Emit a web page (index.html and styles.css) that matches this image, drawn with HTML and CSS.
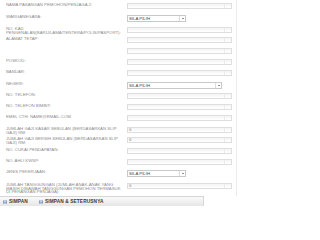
FILE: index.html
```html
<!DOCTYPE html>
<html>
<head>
<meta charset="utf-8">
<link rel="stylesheet" href="styles.css">
</head>
<body>
<div class="form">
  <div class="row r12">
    <div class="label">NAMA PASANGAN PEMOHON/PENJAGA 2:</div>
    <div class="field"><div class="input"></div></div>
  </div>
  <div class="row r12">
    <div class="label">WARGANEGARA:</div>
    <div class="field"><div class="select"><span class="sel-text">SILA PILIH</span><span class="sel-arrow"></span></div></div>
  </div>
  <div class="row r10">
    <div class="label">NO. KAD<br><span class="nowrap">PENGENALAN(BARU/LAMA/TENTERA/POLIS/PASPORT):</span></div>
    <div class="field"><div class="input"></div></div>
  </div>
  <div class="row r22">
    <div class="label">ALAMAT TETAP:</div>
    <div class="field stack"><div class="input"></div><div class="input"></div></div>
  </div>
  <div class="row">
    <div class="label">POSKOD:</div>
    <div class="field"><div class="input"></div></div>
  </div>
  <div class="row r12">
    <div class="label">BANDAR:</div>
    <div class="field"><div class="input"></div></div>
  </div>
  <div class="row">
    <div class="label">NEGERI:</div>
    <div class="field"><div class="select wide"><span class="sel-text">SILA PILIH</span><span class="sel-arrow"></span></div></div>
  </div>
  <div class="row">
    <div class="label">NO. TELEFON:</div>
    <div class="field"><div class="input"></div></div>
  </div>
  <div class="row">
    <div class="label">NO. TELEFON BIMBIT:</div>
    <div class="field"><div class="input"></div></div>
  </div>
  <div class="row r12">
    <div class="label">EMEL CTH: NAME@EMAIL.COM</div>
    <div class="field"><div class="input"></div></div>
  </div>
  <div class="row r10">
    <div class="label">JUMLAH GAJI KASAR SEBULAN (BERDASARKAN SLIP GAJI) RM:</div>
    <div class="field"><div class="input"><span class="val">0</span></div></div>
  </div>
  <div class="row">
    <div class="label">JUMLAH GAJI BERSIH SEBULAN (BERDASARKAN SLIP GAJI) RM:</div>
    <div class="field"><div class="input"><span class="val">0</span></div></div>
  </div>
  <div class="row">
    <div class="label">NO. CUKAI PENDAPATAN:</div>
    <div class="field"><div class="input"></div></div>
  </div>
  <div class="row">
    <div class="label">NO. AHLI KWSP:</div>
    <div class="field"><div class="input"></div></div>
  </div>
  <div class="row r13">
    <div class="label">JENIS PEKERJAAN:</div>
    <div class="field"><div class="select"><span class="sel-text">SILA PILIH</span><span class="sel-arrow"></span></div></div>
  </div>
  <div class="row r13">
    <div class="label">JUMLAH TANGGUNGAN (JUMLAH ANAK-ANAK YANG MASIH DIBAWAH TANGGUNGAN PEMOHON TERMASUK DI PERANGAN PENJAGA):</div>
    <div class="field"><div class="input"><span class="val">0</span></div></div>
  </div>
</div>
<div class="bar">
  <span class="btn">
    <svg class="ico" viewBox="0 0 8 8"><rect x="0.5" y="0.5" width="7" height="7" rx="1" fill="#6b87b3"/><rect x="2" y="1" width="4" height="2.5" fill="#e8eef7"/><rect x="2" y="5" width="4" height="2.5" fill="#c9d4e6"/></svg>
    SIMPAN
  </span>
  <span class="btn">
    <svg class="ico" viewBox="0 0 8 8"><rect x="0.5" y="0.5" width="7" height="7" rx="1" fill="#6b87b3"/><rect x="2" y="1" width="4" height="2.5" fill="#e8eef7"/><rect x="2" y="5" width="4" height="2.5" fill="#c9d4e6"/></svg>
    SIMPAN &amp; SETERUSNYA
  </span>
</div>
</body>
</html>
```

FILE: styles.css
```css
html, body {
  margin: 0;
  padding: 0;
  background: #ffffff;
  overflow: hidden;
}
body {
  font-family: "Liberation Sans", Arial, sans-serif;
  width: 244px;
  height: 206px;
}
.form {
  padding-top: 3px;
  width: 236px;
  border-right: 1px solid #ececec;
  height: 193px;
}
.row {
  display: flex;
  align-items: flex-start;
  height: 11px;
}
.r10 { height: 10px; }
.r12 { height: 12px; }
.r13 { height: 13px; }
.r22 { height: 22px; }
.label {
  width: 116px;
  padding-left: 6px;
  margin-right: 5px;
  font-size: 4.3px;
  line-height: 3.5px;
  color: #8c8c8c;
  text-transform: uppercase;
  overflow-wrap: anywhere;
}
.nowrap {
  white-space: nowrap;
}
.field {
  width: 105px;
}
.stack {
  display: flex;
  flex-direction: column;
  gap: 5px;
}
.input {
  position: relative;
  height: 6px;
  box-sizing: border-box;
  border: 1px solid #dedede;
  background: linear-gradient(#f4f4f4, #ffffff);
  font-size: 4.3px;
  line-height: 4px;
  color: #777;
}
.input::after {
  content: "";
  position: absolute;
  right: 0;
  top: 0;
  bottom: 0;
  width: 6px;
  border-left: 1px solid #ececec;
}
.val {
  padding-left: 1px;
}
.select {
  display: flex;
  align-items: center;
  width: 59px;
  height: 7px;
  box-sizing: border-box;
  border: 1px solid #c8c8c8;
  background: #ffffff;
}
.select.wide { width: 95px; }
.sel-text {
  flex: 1;
  padding-left: 1px;
  font-size: 4.3px;
  line-height: 4px;
  color: #444;
}
.sel-arrow {
  width: 5px;
  height: 100%;
  border-left: 1px solid #dddddd;
  display: flex;
  align-items: center;
  justify-content: center;
}
.sel-arrow::before {
  content: "";
  border-left: 1px solid transparent;
  border-right: 1px solid transparent;
  border-top: 1.5px solid #222;
}
.bar {
  display: flex;
  align-items: center;
  gap: 11px;
  width: 204px;
  height: 10px;
  padding-left: 3px;
  box-sizing: border-box;
  border-top: 1px solid #d6d6d6;
  border-right: 1px solid #d6d6d6;
  background: linear-gradient(#fafafa, #e6e6e6);
}
.btn {
  display: flex;
  align-items: center;
  gap: 2px;
  font-size: 4.8px;
  font-weight: bold;
  color: #3a3a3a;
  letter-spacing: 0.1px;
}
.ico {
  width: 4px;
  height: 4px;
}
```
